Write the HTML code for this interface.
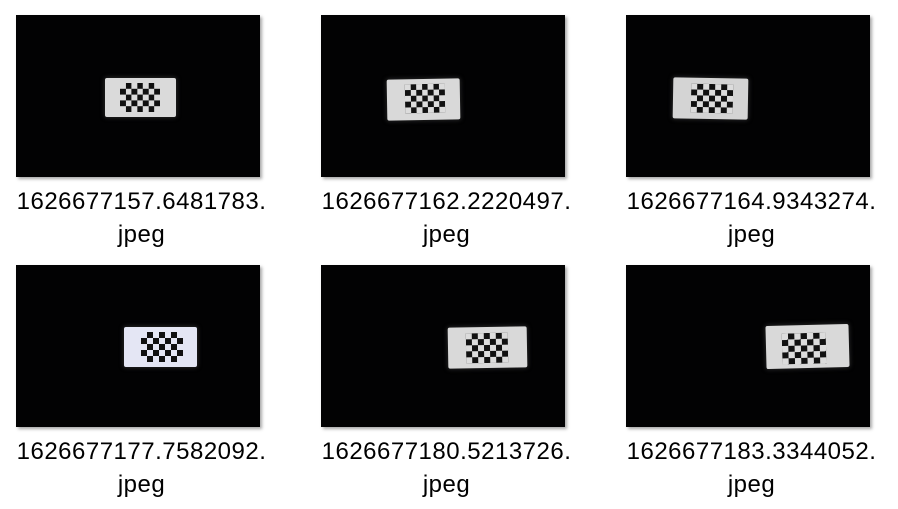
<!DOCTYPE html>
<html><head><meta charset="utf-8"><style>
html,body{margin:0;padding:0;background:#fff;width:898px;height:509px;overflow:hidden;position:relative}
.t{position:absolute;width:244px;height:162px;background:#020203;box-shadow:2px 2px 3px rgba(0,0,0,0.35)}
.b{position:absolute;background:#d9d9d9;border-radius:2px;box-shadow:0 0 4px 1px rgba(60,60,60,0.6)}
.c{position:absolute;background:conic-gradient(#111 25%,#dcdcdc 0 50%,#111 0 75%,#dcdcdc 0)}
.l{position:absolute;width:275px;text-align:center;font-family:"Liberation Sans",sans-serif;font-size:24px;letter-spacing:0.5px;line-height:33px;color:#000}
</style></head><body>

<div class="t" style="left:16px;top:15px">
 <div class="b" style="left:89px;top:63px;width:71px;height:39px;background:#dadada">
  <div class="c" style="left:15px;top:5px;width:40px;height:29px;background-size:11.4px 11.6px"></div></div></div>
<div class="t" style="left:321px;top:15px">
 <div class="b" style="left:66px;top:64px;width:73px;height:41px;transform:rotate(-1deg)">
  <div class="c" style="left:18px;top:5px;width:40px;height:29px;background-size:11.4px 11.6px"></div></div></div>
<div class="t" style="left:626px;top:15px">
 <div class="b" style="left:47px;top:63px;width:75px;height:41px;transform:rotate(1deg);background:#d4d4d4">
  <div class="c" style="left:18px;top:6px;width:42px;height:29px;background-size:12px 11.6px"></div></div></div>

<div class="t" style="left:16px;top:265px">
 <div class="b" style="left:108px;top:62px;width:73px;height:40px;background:#e4e6f4">
  <div class="c" style="left:17px;top:5px;width:42px;height:30px;background-size:12px 12px;background-image:conic-gradient(#111 25%,#e4e6f4 0 50%,#111 0 75%,#e4e6f4 0)"></div></div></div>
<div class="t" style="left:321px;top:265px">
 <div class="b" style="left:127px;top:62px;width:79px;height:41px;transform:rotate(-1deg)">
  <div class="c" style="left:18px;top:6px;width:42px;height:30px;background-size:12px 12px"></div></div></div>
<div class="t" style="left:626px;top:265px">
 <div class="b" style="left:140px;top:60px;width:83px;height:43px;transform:rotate(-1.5deg)">
  <div class="c" style="left:16px;top:8px;width:44px;height:31px;background-size:12.6px 12.4px"></div></div></div>

<div class="l" style="left:4px;top:185px">1626677157.6481783.<br>jpeg</div>
<div class="l" style="left:309px;top:185px">1626677162.2220497.<br>jpeg</div>
<div class="l" style="left:614px;top:185px">1626677164.9343274.<br>jpeg</div>
<div class="l" style="left:4px;top:435px">1626677177.7582092.<br>jpeg</div>
<div class="l" style="left:309px;top:435px">1626677180.5213726.<br>jpeg</div>
<div class="l" style="left:614px;top:435px">1626677183.3344052.<br>jpeg</div>
</body></html>
